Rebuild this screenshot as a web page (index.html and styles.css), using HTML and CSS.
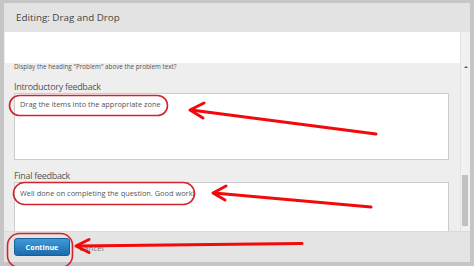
FILE: index.html
```html
<!DOCTYPE html>
<html lang="en">
<head>
    <meta charset="UTF-8">
    <title>Editing: Drag and Drop</title>
    <link rel="stylesheet" href="styles.css">
</head>
<body>
    <div class="modal">
        <div class="modal-header">Editing: Drag and Drop</div>
        <div class="modal-body">
            <div class="content">
                <div class="prev-field"></div>
                <div class="hint">Display the heading "Problem" above the problem text?</div>
                <div class="field">
                    <div class="field-label">Introductory feedback</div>
                    <div class="textbox">Drag the items into the appropriate zone</div>
                </div>
                <div class="field">
                    <div class="field-label">Final feedback</div>
                    <div class="textbox">Well done on completing the question. Good work!</div>
                </div>
            </div>
            <div class="scrollbar">
                <div class="scroll-up"></div>
                <div class="scroll-thumb"></div>
            </div>
        </div>
        <div class="modal-footer">
            <button class="btn-continue">Continue</button>
            <span class="cancel">Cancel</span>
        </div>
    </div>

    <!-- annotations drawn over the screenshot -->
    <svg class="marks" width="474" height="266" viewBox="0 0 474 266">
        <g fill="none" stroke="#d3242e" stroke-width="1.6">
            <rect x="9.5" y="95.5" width="158" height="20" rx="10"/>
            <rect x="13.5" y="182.5" width="181" height="22" rx="11"/>
            <rect x="7.5" y="233.5" width="65" height="34" rx="12"/>
        </g>
        <g fill="none" stroke="#f20a0a" stroke-width="3" stroke-linecap="round" stroke-linejoin="round">
            <line x1="376" y1="134" x2="191" y2="110"/>
            <polyline points="204,103 190,110 203,118"/>
            <line x1="371" y1="207" x2="214" y2="193"/>
            <polyline points="226,186 213,193 225,200"/>
            <line x1="302" y1="243.5" x2="77" y2="246"/>
            <polyline points="89,239.5 76,246 89,252.5"/>
        </g>
    </svg>
</body>
</html>
```

FILE: styles.css
```css
body {
    margin: 0;
    width: 474px;
    height: 266px;
    overflow: hidden;
    position: relative;
    background-color: #c6c6c6;
    font-family: 'Open Sans', sans-serif;
    color: #555555;
}

.modal {
    margin: 3px 4px 0 4px;
    height: 259px;
    background-color: #eeeeee;
    display: flex;
    flex-direction: column;
}

.modal-header {
    height: 29px;
    flex-shrink: 0;
    background-color: #e3e3e3;
    padding-left: 12px;
    display: flex;
    align-items: center;
    font-size: 9.8px;
    color: #444444;
}

.modal-body {
    flex: 1;
    display: flex;
    overflow: hidden;
}

.content {
    flex: 1;
    background-color: #eeeeee;
}

.prev-field {
    height: 31px;
    margin-left: 1px;
    background-color: #ffffff;
}

.hint {
    height: 8px;
    padding-left: 10px;
    font-size: 6.3px;
    line-height: 8px;
    color: #555555;
}

.field {
    padding: 10px 0 0 10px;
}

.field-label {
    font-size: 9px;
    letter-spacing: -0.3px;
    line-height: 12px;
    color: #555555;
}

.textbox {
    width: 423px;
    height: 55px;
    padding: 5px;
    background-color: #ffffff;
    border: 1px solid #cccccc;
    font-size: 7.4px;
    line-height: 10px;
    color: #555555;
}

.scrollbar {
    width: 9px;
    background-color: #f1f1f1;
    border-left: 1px solid #e2e2e2;
}

.scroll-up {
    margin: 34px auto 0;
    width: 0;
    height: 0;
    border-left: 2px solid transparent;
    border-right: 2px solid transparent;
    border-bottom: 2px solid #555555;
}

.scroll-thumb {
    margin: 107px 0 0 1px;
    width: 6px;
    height: 51px;
    background-color: #c1c1c1;
}

.modal-footer {
    height: 31px;
    flex-shrink: 0;
    background-color: #e4e4e4;
    border-top: 1px solid #dadada;
    box-sizing: border-box;
    padding-left: 10px;
    display: flex;
    align-items: center;
    gap: 9px;
}

.btn-continue {
    width: 56px;
    height: 18px;
    padding: 0;
    border: 1px solid #1b5f98;
    border-radius: 3px;
    background: linear-gradient(#3f9ad9, #1e6bab);
    color: #ffffff;
    font-family: 'Open Sans', sans-serif;
    font-size: 7.2px;
    font-weight: bold;
}

.cancel {
    font-size: 8px;
    color: #777777;
}

.marks {
    position: absolute;
    left: 0;
    top: 0;
}
```
